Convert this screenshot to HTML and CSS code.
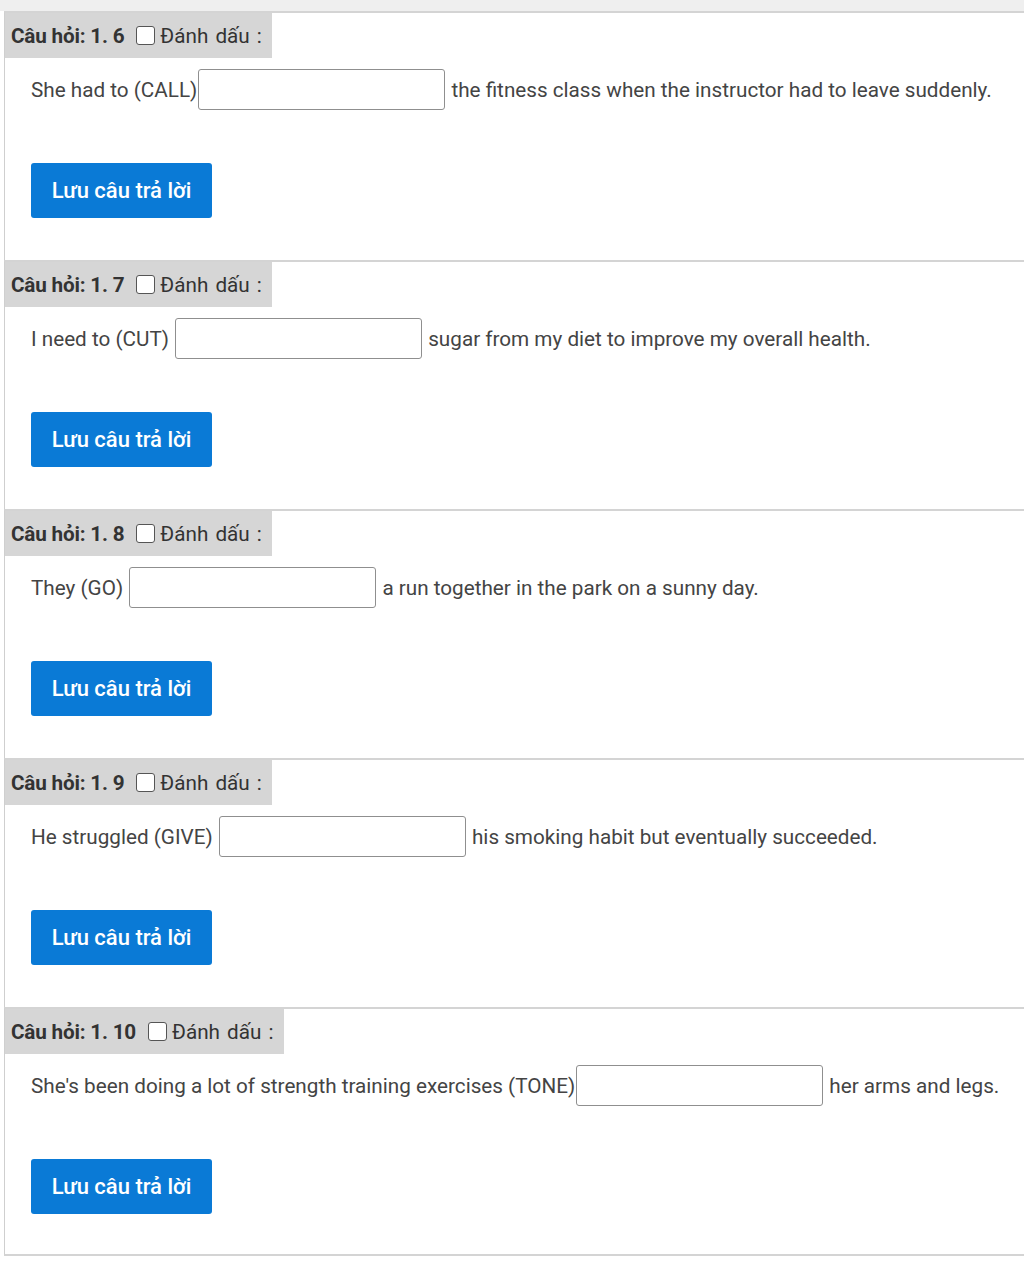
FILE: index.html
```html
<!DOCTYPE html>
<html>
  <head>
    <title>Câu hỏi</title>
    <meta charset="utf-8">
    <link rel="stylesheet" href="styles.css">
  </head>
  <body>
    <div class="top-strip"></div>
    <div class="question-list">
      <div class="question">
        <div class="question-head">
          <b>Câu hỏi: 1. 6</b>
          <input type="checkbox" class="flag">
          <span>Đánh dấu :</span>
        </div>
        <div class="question-body">
          <div class="sentence">She had to (CALL)<input type="text" class="answer"> the fitness class when the instructor had to leave suddenly.</div>
          <button class="save-btn">Lưu câu trả lời</button>
        </div>
      </div>
      <div class="question">
        <div class="question-head">
          <b>Câu hỏi: 1. 7</b>
          <input type="checkbox" class="flag">
          <span>Đánh dấu :</span>
        </div>
        <div class="question-body">
          <div class="sentence">I need to (CUT) <input type="text" class="answer"> sugar from my diet to improve my overall health.</div>
          <button class="save-btn">Lưu câu trả lời</button>
        </div>
      </div>
      <div class="question">
        <div class="question-head">
          <b>Câu hỏi: 1. 8</b>
          <input type="checkbox" class="flag">
          <span>Đánh dấu :</span>
        </div>
        <div class="question-body">
          <div class="sentence">They (GO) <input type="text" class="answer"> a run together in the park on a sunny day.</div>
          <button class="save-btn">Lưu câu trả lời</button>
        </div>
      </div>
      <div class="question">
        <div class="question-head">
          <b>Câu hỏi: 1. 9</b>
          <input type="checkbox" class="flag">
          <span>Đánh dấu :</span>
        </div>
        <div class="question-body">
          <div class="sentence">He struggled (GIVE) <input type="text" class="answer"> his smoking habit but eventually succeeded.</div>
          <button class="save-btn">Lưu câu trả lời</button>
        </div>
      </div>
      <div class="question">
        <div class="question-head">
          <b>Câu hỏi: 1. 10</b>
          <input type="checkbox" class="flag">
          <span>Đánh dấu :</span>
        </div>
        <div class="question-body">
          <div class="sentence">She's been doing a lot of strength training exercises (TONE)<input type="text" class="answer"> her arms and legs.</div>
          <button class="save-btn">Lưu câu trả lời</button>
        </div>
      </div>
    </div>
  </body>
</html>
```

FILE: styles.css
```css
body {
  margin: 0;
  background-color: #fff;
  font-family: Roboto, "Liberation Sans", Arial, sans-serif;
  font-size: 20.7px;
  color: #444;
}

.top-strip {
  height: 11px;
  background-color: #efefef;
}

.question-list {
  margin-left: 4px;
}

.question {
  height: 247px;
  border-top: 2px solid #d4d4d4;
  border-left: 1px solid #cfcfcf;
}

.question:last-child {
  border-bottom: 2px solid #d4d4d4;
  height: 245px;
}

.question-head {
  display: inline-flex;
  align-items: center;
  height: 45px;
  padding: 0 10px 0 6px;
  background-color: #d6d6d6;
  color: #333;
}

.question-head b {
  font-weight: 700;
  letter-spacing: -0.2px;
}

.question-head span {
  word-spacing: 2px;
}

.flag {
  appearance: none;
  -webkit-appearance: none;
  width: 19px;
  height: 19px;
  margin: 0 5px 0 12px;
  border: 1.5px solid #555;
  border-radius: 3px;
  background-color: #fff;
  box-sizing: border-box;
}

.question-body {
  padding: 11px 0 0 26px;
}

.sentence {
  display: flex;
  align-items: center;
  white-space: pre;
  height: 41px;
}

.answer {
  width: 247px;
  height: 41px;
  box-sizing: border-box;
  margin: 0 1px;
  border: 1px solid #8f8f8f;
  border-radius: 3px;
  background-color: #fff;
}

.save-btn {
  display: block;
  margin-top: 53px;
  width: 181px;
  height: 55px;
  padding: 0;
  border: none;
  border-radius: 3px;
  background-color: #0a7ad6;
  color: #fff;
  font-family: Roboto, "Liberation Sans", Arial, sans-serif;
  font-size: 22px;
  font-weight: 500;
  cursor: pointer;
}
```
